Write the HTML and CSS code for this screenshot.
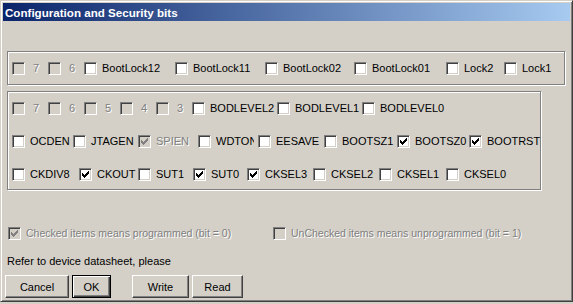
FILE: index.html
```html
<!DOCTYPE html>
<html lang="en">
<head>
    <meta charset="UTF-8">
    <title>Configuration and Security bits</title>
    <link rel="stylesheet" href="styles.css">
</head>
<body>
    <div class="window">
        <!-- Caption -->
        <div class="titlebar">
            <span class="title">Configuration and Security bits</span>
        </div>

        <div class="client">
            <!-- Lock bits -->
            <div class="group group-lock">
                <div class="row row-lock">
                    <label class="item off"><span class="box"></span><span class="text num">7</span></label>
                    <label class="item off"><span class="box"></span><span class="text num">6</span></label>
                    <label class="item"><span class="box"></span><span class="text">BootLock12</span></label>
                    <label class="item"><span class="box"></span><span class="text">BootLock11</span></label>
                    <label class="item"><span class="box"></span><span class="text">BootLock02</span></label>
                    <label class="item"><span class="box"></span><span class="text">BootLock01</span></label>
                    <label class="item"><span class="box"></span><span class="text">Lock2</span></label>
                    <label class="item"><span class="box"></span><span class="text">Lock1</span></label>
                </div>
            </div>

            <!-- Fuse bits -->
            <div class="group group-fuse">
                <div class="row row-ext">
                    <label class="item off"><span class="box"></span><span class="text num">7</span></label>
                    <label class="item off"><span class="box"></span><span class="text num">6</span></label>
                    <label class="item off"><span class="box"></span><span class="text num">5</span></label>
                    <label class="item off"><span class="box"></span><span class="text num">4</span></label>
                    <label class="item off"><span class="box"></span><span class="text num">3</span></label>
                    <label class="item"><span class="box"></span><span class="text">BODLEVEL2</span></label>
                    <label class="item"><span class="box"></span><span class="text">BODLEVEL1</span></label>
                    <label class="item"><span class="box"></span><span class="text">BODLEVEL0</span></label>
                </div>
                <div class="row row-high">
                    <label class="item"><span class="box"></span><span class="text">OCDEN</span></label>
                    <label class="item"><span class="box"></span><span class="text">JTAGEN</span></label>
                    <label class="item off checked"><span class="box"><svg class="tick" viewBox="0 0 7 7"><path d="M0 2h1v3H0zM1 3h1v3H1zM2 4h1v3H2zM3 3h1v3H3zM4 2h1v3H4zM5 1h1v3H5zM6 0h1v3H6z"/></svg></span><span class="text">SPIEN</span></label>
                    <label class="item"><span class="box"></span><span class="text clip">WDTON</span></label>
                    <label class="item"><span class="box"></span><span class="text">EESAVE</span></label>
                    <label class="item"><span class="box"></span><span class="text">BOOTSZ1</span></label>
                    <label class="item checked"><span class="box"><svg class="tick" viewBox="0 0 7 7"><path d="M0 2h1v3H0zM1 3h1v3H1zM2 4h1v3H2zM3 3h1v3H3zM4 2h1v3H4zM5 1h1v3H5zM6 0h1v3H6z"/></svg></span><span class="text">BOOTSZ0</span></label>
                    <label class="item checked"><span class="box"><svg class="tick" viewBox="0 0 7 7"><path d="M0 2h1v3H0zM1 3h1v3H1zM2 4h1v3H2zM3 3h1v3H3zM4 2h1v3H4zM5 1h1v3H5zM6 0h1v3H6z"/></svg></span><span class="text">BOOTRST</span></label>
                </div>
                <div class="row row-low">
                    <label class="item"><span class="box"></span><span class="text">CKDIV8</span></label>
                    <label class="item checked"><span class="box"><svg class="tick" viewBox="0 0 7 7"><path d="M0 2h1v3H0zM1 3h1v3H1zM2 4h1v3H2zM3 3h1v3H3zM4 2h1v3H4zM5 1h1v3H5zM6 0h1v3H6z"/></svg></span><span class="text">CKOUT</span></label>
                    <label class="item"><span class="box"></span><span class="text">SUT1</span></label>
                    <label class="item checked"><span class="box"><svg class="tick" viewBox="0 0 7 7"><path d="M0 2h1v3H0zM1 3h1v3H1zM2 4h1v3H2zM3 3h1v3H3zM4 2h1v3H4zM5 1h1v3H5zM6 0h1v3H6z"/></svg></span><span class="text">SUT0</span></label>
                    <label class="item checked"><span class="box"><svg class="tick" viewBox="0 0 7 7"><path d="M0 2h1v3H0zM1 3h1v3H1zM2 4h1v3H2zM3 3h1v3H3zM4 2h1v3H4zM5 1h1v3H5zM6 0h1v3H6z"/></svg></span><span class="text">CKSEL3</span></label>
                    <label class="item"><span class="box"></span><span class="text">CKSEL2</span></label>
                    <label class="item"><span class="box"></span><span class="text">CKSEL1</span></label>
                    <label class="item"><span class="box"></span><span class="text">CKSEL0</span></label>
                </div>
            </div>

            <!-- Legend -->
            <div class="row row-legend">
                <label class="item off checked"><span class="box"><svg class="tick" viewBox="0 0 7 7"><path d="M0 2h1v3H0zM1 3h1v3H1zM2 4h1v3H2zM3 3h1v3H3zM4 2h1v3H4zM5 1h1v3H5zM6 0h1v3H6z"/></svg></span><span class="text">Checked items means programmed (bit = 0)</span></label>
                <label class="item off"><span class="box"></span><span class="text">UnChecked items means unprogrammed (bit = 1)</span></label>
            </div>

            <p class="note">Refer to device datasheet, please</p>

            <!-- Buttons -->
            <div class="buttons">
                <button class="btn btn-cancel">Cancel</button>
                <button class="btn btn-ok default">OK</button>
                <button class="btn btn-write">Write</button>
                <button class="btn btn-read">Read</button>
            </div>
        </div>
    </div>
</body>
</html>
```

FILE: styles.css
```css
/* Classic dialog palette */
:root {
    --face: #d4d0c8;
    --shadow: #808080;
    --dark: #404040;
    --light: #ffffff;
    --caption-from: #0a246a;
    --caption-to: #a6caf0;
}

body {
    margin: 0;
    background-color: var(--face);
    font-family: 'Liberation Sans', Arial, sans-serif;
    font-size: 11px;
    color: #000;
}

/* Window frame */
.window {
    box-sizing: border-box;
    width: 573px;
    height: 302px;
    padding: 2px;
    background-color: var(--face);
    border: 1px solid;
    border-color: var(--face) var(--dark) var(--dark) var(--face);
    box-shadow: inset 1px 1px var(--light), inset -1px -1px var(--shadow);
}

.titlebar {
    height: 18px;
    display: flex;
    align-items: center;
    padding-left: 2px;
    background: linear-gradient(to right, var(--caption-from), var(--caption-to));
}

.title {
    color: #fff;
    font-weight: bold;
    font-size: 11.6px;
}

.client {
    padding: 30px 0 0 2px;
}

/* Etched group boxes */
.group {
    box-sizing: border-box;
    margin-left: 2px;
    border: 1px solid var(--shadow);
    box-shadow: inset 1px 1px var(--light), 1px 1px var(--light);
}

.group-lock {
    width: 558px;
    height: 34px;
    padding-top: 10px;
}

.group-fuse {
    width: 534px;
    height: 99px;
    margin-top: 6px;
    padding-top: 10px;
    display: flex;
    flex-direction: column;
    gap: 20px;
}

/* Checkbox rows */
.row {
    display: grid;
    height: 13px;
    padding-left: 4px;
}

.row-lock { grid-template-columns: 36px 36px 91px 90px 89px 92px 58px auto; }
.row-ext { grid-template-columns: 36px 36px 36px 36px 36px 85px 85px auto; }
.row-high { grid-template-columns: 61px 65px 60px 60px 66px 73px 72px auto; }
.row-low { grid-template-columns: 67px 59px 55px 54px 66px 66px 67px auto; }

.row-legend {
    grid-template-columns: 265px auto;
    margin: 37px 0 0 3px;
    padding-left: 0;
    font-size: 10.5px;
}

.item {
    display: flex;
    align-items: center;
    gap: 5px;
    white-space: nowrap;
    line-height: 13px;
}

.box {
    box-sizing: border-box;
    flex: none;
    width: 13px;
    height: 13px;
    position: relative;
    background-color: #fff;
    border: 1px solid;
    border-color: var(--shadow) var(--light) var(--light) var(--shadow);
    box-shadow: inset 1px 1px var(--dark), inset -1px -1px var(--face);
}

.tick {
    position: absolute;
    left: 2px;
    top: 2px;
    width: 7px;
    height: 7px;
    fill: #000;
    shape-rendering: crispEdges;
}

/* Disabled items */
.off .box {
    background-color: var(--face);
}

.off .tick {
    fill: var(--shadow);
}

.off .text {
    color: var(--shadow);
    text-shadow: 1px 1px var(--light);
}

.num {
    padding-left: 3px;
}

.clip {
    display: block;
    width: 38px;
    overflow: hidden;
}

.note {
    margin: 15px 0 0 2px;
    line-height: 13px;
}

/* Push buttons */
.buttons {
    display: flex;
    margin-top: 7px;
}

.btn {
    box-sizing: border-box;
    height: 23px;
    padding: 0;
    background-color: var(--face);
    font-family: 'Liberation Sans', Arial, sans-serif;
    font-size: 11px;
    color: #000;
    border: 1px solid;
    border-color: var(--light) var(--dark) var(--dark) var(--light);
    box-shadow: inset -1px -1px var(--shadow);
}

.btn.default {
    border-color: #000;
    box-shadow: inset 1px 1px var(--light), inset -1px -1px var(--dark), inset -2px -2px var(--shadow);
}

.btn-cancel { width: 64px; }
.btn-ok { width: 39px; margin-left: 3px; }
.btn-write { width: 57px; margin-left: 21px; }
.btn-read { width: 51px; margin-left: 3px; }
```
